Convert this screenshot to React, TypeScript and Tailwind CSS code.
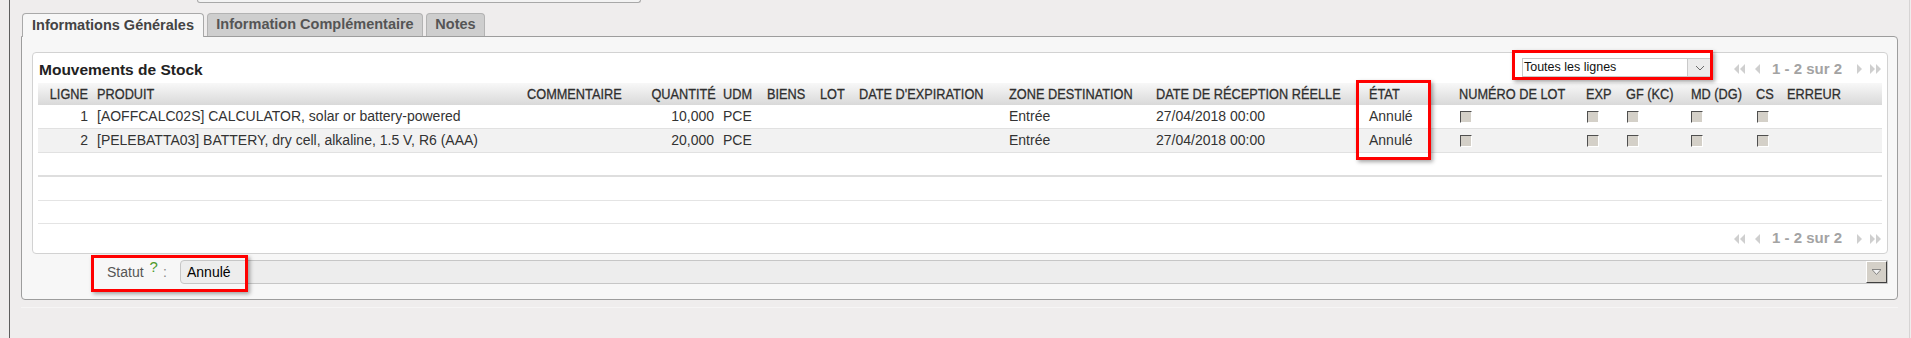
import React from 'react';

type Row = {
  ligne: number;
  produit: string;
  qty: string;
  udm: string;
  zone: string;
  date: string;
  etat: string;
};

const rows: Row[] = [
  {
    ligne: 1,
    produit: '[AOFFCALC02S] CALCULATOR, solar or battery-powered',
    qty: '10,000',
    udm: 'PCE',
    zone: 'Entrée',
    date: '27/04/2018 00:00',
    etat: 'Annulé',
  },
  {
    ligne: 2,
    produit: '[PELEBATTA03] BATTERY, dry cell, alkaline, 1.5 V, R6 (AAA)',
    qty: '20,000',
    udm: 'PCE',
    zone: 'Entrée',
    date: '27/04/2018 00:00',
    etat: 'Annulé',
  },
];

const cols =
  'grid grid-cols-[54px_430px_118px_78px_44px_53px_39px_150px_147px_213px_90px_127px_40px_65px_65px_31px_1fr]';

const headers = [
  'LIGNE',
  'PRODUIT',
  'COMMENTAIRE',
  'QUANTITÉ',
  'UDM',
  'BIENS',
  'LOT',
  "DATE D'EXPIRATION",
  'ZONE DESTINATION',
  'DATE DE RÉCEPTION RÉELLE',
  'ÉTAT',
  'NUMÉRO DE LOT',
  'EXP',
  'GF (KC)',
  'MD (DG)',
  'CS',
  'ERREUR',
];

function Checkbox() {
  return (
    <span className="block w-[12px] h-[12px] bg-[#d4d0c8] border-[1.5px] border-t-[#4f4f4f] border-l-[#4f4f4f] border-r-white border-b-white" />
  );
}

function Pager() {
  return (
    <div className="flex items-center text-[#a3a3a3] font-bold text-[15px]">
      <svg width="14" height="10" viewBox="0 0 14 10" className="mr-[8px]">
        <polygon points="6,0 6,10 1,5" fill="#cfcfcf" />
        <polygon points="12,0 12,10 7,5" fill="#cfcfcf" />
      </svg>
      <svg width="6" height="10" viewBox="0 0 6 10" className="mr-[11px]">
        <polygon points="5,0 5,10 0,5" fill="#cfcfcf" />
      </svg>
      <span>1 - 2 sur 2</span>
      <svg width="6" height="10" viewBox="0 0 6 10" className="ml-[14px]">
        <polygon points="1,0 1,10 6,5" fill="#cfcfcf" />
      </svg>
      <svg width="14" height="10" viewBox="0 0 14 10" className="ml-[6px]">
        <polygon points="2,0 2,10 7,5" fill="#cfcfcf" />
        <polygon points="8,0 8,10 13,5" fill="#cfcfcf" />
      </svg>
    </div>
  );
}

export default function App() {
  return (
    <div className="relative w-[1911px] h-[338px] overflow-hidden bg-[#efeded] font-['Liberation_Sans',Arial,sans-serif] text-[#333]">
      <div className="ml-[9px] w-[1901px] h-full border-l border-r border-l-[#5e5e5e] border-r-[#d6d4d4] flex flex-col">
        {/* field stub above the tabs */}
        <div className="ml-[187px] w-[444px] h-[3px] border-x border-b border-[#a8a8a8] rounded-b-[4px] bg-[#f3f3f3]" />

        {/* tabs */}
        <div className="mt-[10px] ml-[12px] flex gap-[3px] h-[24px]">
          <div className="relative z-10 w-[182px] h-[24px] flex items-center justify-center bg-[#f7f7f7] border border-b-0 border-[#a9a9a9] rounded-t-[4px] text-[14.5px] font-bold text-[#444]">
            Informations Générales
          </div>
          <div className="w-[216px] h-[23px] flex items-center justify-center bg-[#cecece] border border-b-0 border-[#b3b3b3] rounded-t-[4px] text-[14.5px] font-bold text-[#555]">
            Information Complémentaire
          </div>
          <div className="w-[59px] h-[23px] flex items-center justify-center bg-[#cecece] border border-b-0 border-[#b3b3b3] rounded-t-[4px] text-[14.5px] font-bold text-[#555]">
            Notes
          </div>
        </div>

        {/* tab panel */}
        <div className="ml-[11px] mr-[11px] -mt-px border border-[#9d9d9d] rounded-b-[4px] rounded-tr-[4px] bg-[#f7f7f7] pt-[15px] pl-[10px] pr-[9px] pb-[15px]">
          {/* stock moves box */}
          <div className="bg-white border border-[#d2d2d2] rounded-[4px] px-[5px]">
            <div className="h-[30px] flex items-center justify-between">
              <span className="pl-[1px] pt-[4px] text-[15.5px] font-bold text-[#222]">Mouvements de Stock</span>
              <div className="flex items-center gap-[20px] pt-[2px]">
                <div className="w-[191px] h-[19px] -mt-[3px] flex items-stretch border border-[#c9c9c9] bg-white">
                  <span className="flex-1 pl-[1px] text-[12.5px] leading-[17px] text-[#111]">Toutes les lignes</span>
                  <span className="w-[25px] flex items-center justify-center bg-[#ececec] border-l border-[#c9c9c9]">
                    <svg width="10" height="6" viewBox="0 0 10 6">
                      <polyline points="1,1 5,5 9,1" fill="none" stroke="#6b6b6b" strokeWidth="1" />
                    </svg>
                  </span>
                </div>
                <Pager />
              </div>
            </div>

            {/* header */}
            <div className={`${cols} h-[22px] items-center bg-gradient-to-b from-[#f8f8f8] to-[#d9d9d9] text-[15px] text-[#2f2f2f] [-webkit-text-stroke:0.3px_#2f2f2f]`}>
              {headers.map((h, i) => {
                const right = i === 0 || i === 3;
                return (
                  <span key={h} className={`whitespace-nowrap ${right ? 'text-right pr-[4px]' : 'pl-[5px]'}`}>
                    <span className={`inline-block scale-x-[0.85] ${right ? 'origin-right' : 'origin-left'}`}>{h}</span>
                  </span>
                );
              })}
            </div>

            {/* rows */}
            {rows.map((r, idx) => (
              <div
                key={r.ligne}
                className={`${cols} h-[24px] items-center border-b border-[#e1e1e1] text-[14px] ${idx % 2 === 1 ? 'bg-[#f2f2f2]' : 'bg-white'}`}
              >
                <span className="text-right pr-[4px]">{r.ligne}</span>
                <span className="pl-[5px] whitespace-nowrap">{r.produit}</span>
                <span />
                <span className="text-right pr-[4px]">{r.qty}</span>
                <span className="pl-[5px]">{r.udm}</span>
                <span />
                <span />
                <span />
                <span className="pl-[5px]">{r.zone}</span>
                <span className="pl-[5px]">{r.date}</span>
                <span className="pl-[5px]">{r.etat}</span>
                <span className="pl-[6px]"><Checkbox /></span>
                <span className="pl-[6px]"><Checkbox /></span>
                <span className="pl-[6px]"><Checkbox /></span>
                <span className="pl-[5px]"><Checkbox /></span>
                <span className="pl-[6px]"><Checkbox /></span>
                <span />
              </div>
            ))}
            <div className="h-[24px] border-b-2 border-[#dedede]" />
            <div className="h-[24px] border-b border-[#e4e4e4]" />
            <div className="h-[23px] border-b border-[#e4e4e4]" />

            <div className="h-[29px] flex items-center justify-end">
              <Pager />
            </div>
          </div>

          {/* status bar */}
          <div className="mt-[6px] h-[24px] flex">
            <div className="w-[148px] flex items-center pl-[75px] text-[14px] text-[#555]">
              <span>Statut</span>
              <span className="ml-[6px] -mt-[9px] text-[#4f9a2c] text-[15px]">?</span>
              <span className="ml-[5px] text-[#888]">:</span>
            </div>
            <div className="flex-1 flex items-center justify-between bg-[#ededed] border border-[#c6c6c6] rounded-l-[4px]">
              <span className="pl-[6px] text-[14px] text-black">Annulé</span>
              <span className="w-[21px] h-[22px] flex items-center justify-center bg-[#d4d0c8] border border-t-white border-l-white border-r-[#404040] border-b-[#404040]">
                <svg width="9" height="6" viewBox="0 0 9 6">
                  <polygon points="0,0.5 9,0.5 4.5,5.5" fill="#f2f2f2" stroke="#6e6e6e" strokeWidth="0.8" />
                </svg>
              </span>
            </div>
          </div>
        </div>
        <div className="mt-[7px] ml-[11px] mr-[11px] h-px bg-[#f6f5f5]" />
      </div>

      {/* red highlight boxes */}
      <div className="absolute left-[1512px] top-[50px] w-[201px] h-[30px] border-[3px] border-[#ff0000] shadow-[2px_2px_4px_rgba(0,0,0,0.35)]" />
      <div className="absolute left-[1356px] top-[80px] w-[75px] h-[80px] border-[3px] border-[#ff0000] shadow-[2px_2px_4px_rgba(0,0,0,0.35)]" />
      <div className="absolute left-[91px] top-[255px] w-[157px] h-[37px] border-[3px] border-[#ff0000] shadow-[2px_2px_4px_rgba(0,0,0,0.35)]" />
    </div>
  );
}
